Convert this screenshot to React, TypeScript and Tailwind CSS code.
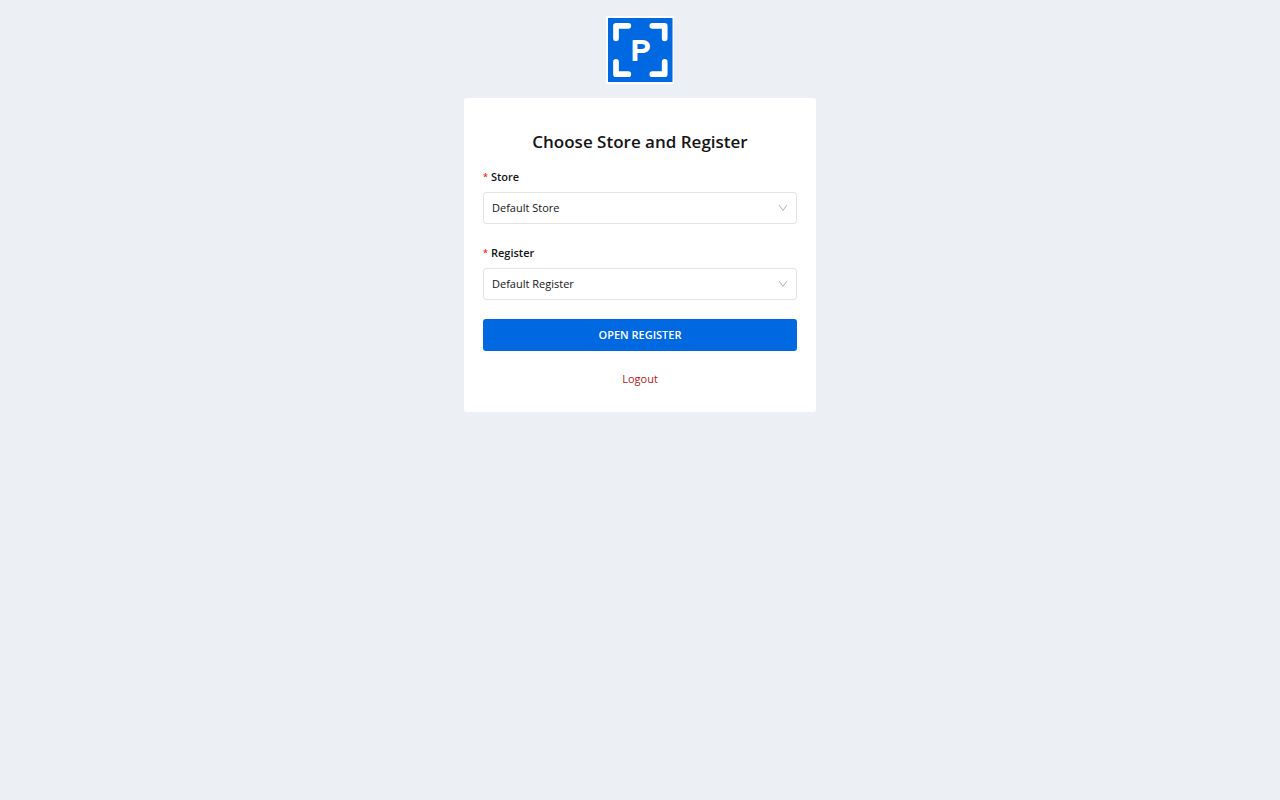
import { useId } from "react";

function Logo() {
  return (
    <svg className="size-17" viewBox="0 0 68 68" role="img" aria-label="P">
      <rect width="68" height="68" fill="#ffffff" />
      <rect x="2" y="2" width="64.5" height="64" fill="#0068e1" />
      <g fill="none" stroke="#ffffff" strokeWidth="5.7" strokeLinecap="round" strokeLinejoin="round">
        <path d="M22.3 9.8H10V22.3" />
        <path d="M46.3 9.8H58.7V22.3" />
        <path d="M10 45.8V58.2H22.3" />
        <path d="M58.7 45.8V58.2H46.3" />
      </g>
      <text
        x="25.2"
        y="43.6"
        fontFamily="Liberation Sans, sans-serif"
        fontSize="28.5"
        fill="#ffffff"
        stroke="#ffffff"
        strokeWidth="2"
        strokeLinejoin="round"
      >
        P
      </text>
    </svg>
  );
}

function SelectField({ label, options }: { label: string; options: string[] }) {
  const id = useId();
  return (
    <div className="mb-[19px]">
      <label htmlFor={id} className="mb-[5px] flex h-5 items-center gap-[3px] font-semibold">
        <span className="text-[9px] leading-5 text-[#ff2020]" aria-hidden="true">
          *
        </span>
        {label}
      </label>
      <div className="relative">
        <select
          id={id}
          required
          className="h-8 w-full appearance-none rounded-[3px] border border-[#e4e4e4] bg-white px-2 text-[#141414]"
        >
          {options.map((option) => (
            <option key={option}>{option}</option>
          ))}
        </select>
        <svg
          className="pointer-events-none absolute top-1/2 right-2 size-3 -translate-y-1/2"
          viewBox="0 0 12 12"
          fill="none"
          stroke="#b0b0b0"
          strokeWidth="1"
          aria-hidden="true"
        >
          <path d="M2.2 3.2L6 8.4L9.8 3.2" />
        </svg>
      </div>
    </div>
  );
}

export default function App() {
  return (
    <div className="flex min-h-screen flex-col items-center bg-[#ecf0f5] px-4 pt-4 font-['Open_Sans',sans-serif] text-[11px] text-[#141414]">
      <Logo />
      <main className="mt-3.5 w-full max-w-[352px] rounded-[3px] bg-white px-[19px] pt-8 pb-[25px]">
        <h1 className="mb-[13px] text-center text-[17px] leading-6 font-semibold">Choose Store and Register</h1>
        <form onSubmit={(event) => event.preventDefault()}>
          <SelectField label="Store" options={["Default Store"]} />
          <SelectField label="Register" options={["Default Register"]} />
          <button type="submit" className="h-8 w-full rounded-[3px] bg-[#0068e1] font-semibold text-white">
            OPEN REGISTER
          </button>
        </form>
        <div className="mt-5 text-center leading-4">
          <a href="#logout" className="text-[#b01818]">
            Logout
          </a>
        </div>
      </main>
    </div>
  );
}
